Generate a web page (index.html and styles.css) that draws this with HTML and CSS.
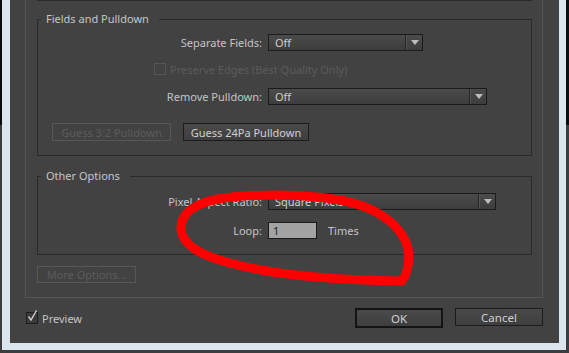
FILE: index.html
```html
<!DOCTYPE html>
<html lang="en">

<head>
    <meta charset="UTF-8">
    <meta name="viewport" content="width=device-width, initial-scale=1.0">
    <title>Interpret Footage</title>
    <link rel="stylesheet" href="styles.css">
</head>

<body>
    <div class="screen">
        <div class="frame">
            <div class="dialog">
                <div class="panel">
                    <div class="prev-group"></div>

                    <fieldset class="group group-fields">
                        <legend>Fields and Pulldown</legend>
                        <div class="row row-first">
                            <label class="row-label">Separate Fields:</label>
                            <div class="select select-short"><span class="select-value">Off</span><span class="select-arrow"></span></div>
                        </div>
                        <div class="check-row is-disabled">
                            <span class="box"></span>
                            <span>Preserve Edges (Best Quality Only)</span>
                        </div>
                        <div class="row">
                            <label class="row-label">Remove Pulldown:</label>
                            <div class="select select-mid"><span class="select-value">Off</span><span class="select-arrow"></span></div>
                        </div>
                        <div class="btn-row">
                            <button class="btn btn-disabled btn-guess32">Guess 3:2 Pulldown</button>
                            <button class="btn btn-guess24">Guess 24Pa Pulldown</button>
                        </div>
                    </fieldset>

                    <fieldset class="group group-other">
                        <legend>Other Options</legend>
                        <div class="row row-first">
                            <label class="row-label">Pixel Aspect Ratio:</label>
                            <div class="select select-long"><span class="select-value">Square Pixels</span><span class="select-arrow"></span></div>
                        </div>
                        <div class="row row-loop">
                            <label class="row-label">Loop:</label>
                            <div class="loop-field">
                                <input class="loop-input" type="text" value="1">
                                <span class="times">Times</span>
                            </div>
                        </div>
                    </fieldset>

                    <button class="btn btn-disabled btn-more">More Options...</button>
                </div>

                <div class="footer">
                    <label class="check-row preview">
                        <span class="box">
                            <svg width="12" height="14" viewBox="0 0 12 14"><path d="M2.5 7.5 L5 11 L10.5 1.5" fill="none" stroke="#d2d2d2" stroke-width="1.4"/></svg>
                        </span>
                        <span>Preview</span>
                    </label>
                    <div class="footer-btns">
                        <button class="btn btn-ok">OK</button>
                        <button class="btn btn-cancel">Cancel</button>
                    </div>
                </div>
            </div>
        </div>

        <!-- red marker scribble drawn over the dialog -->
        <svg class="scribble" width="569" height="353" viewBox="0 0 569 353">
            <path d="M402 281 C411 268 410 250 405 240 C395 220 372 206 340 200 C305 194 255 193 218 199 C192 204 180 215 181 230 C183 245 200 255 230 263 C270 274 330 280 402 281" fill="none" stroke="#ff0000" stroke-width="9" stroke-linecap="round" stroke-linejoin="round"/>
        </svg>
    </div>
</body>
</html>
```

FILE: styles.css
```css
body {
    margin: 0;
    padding: 0;
    background: #2f2f2f;
    font-family: 'Noto Sans', 'Liberation Sans', sans-serif;
    font-size: 11px;
    color: #c4c4c4;
}

.screen {
    position: relative;
    width: 569px;
    height: 353px;
    overflow: hidden;
    background: linear-gradient(to bottom, #0c0c0c 0, #0c0c0c 125px, #3d3d3d 125px);
}

.frame {
    box-sizing: border-box;
    width: 564px;
    height: 350px;
    margin-left: 2px;
    padding: 0 7px 7px 8px;
    background: #dbe5ee;
}

.dialog {
    height: 343px;
    background: #424242;
}

.panel {
    box-sizing: border-box;
    width: 518px;
    height: 298px;
    margin-left: 15px;
    border: 1px solid #555;
    border-top: none;
}

.prev-group {
    margin: 0 10px 0 11px;
    border-bottom: 1px solid #2a2a2a;
}

.group {
    margin: 11px 10px 0 11px;
    padding: 0;
    border: 1px solid #2a2a2a;
    min-width: 0;
}

.group legend {
    margin-left: 3px;
    padding: 0 10px 0 5px;
    line-height: 14px;
    color: #c6c6c6;
}

.row {
    display: grid;
    grid-template-columns: 224px auto;
    column-gap: 6px;
    align-items: center;
    height: 17px;
}

.row-label {
    text-align: right;
}

.group-fields .row-first {
    margin-top: 8px;
}

.select {
    box-sizing: border-box;
    display: flex;
    height: 17px;
    border: 1px solid #1b1b1b;
    background: linear-gradient(to bottom, #4b4b4b, #3d3d3d);
    color: #cfcfcf;
}

.select-short {
    width: 155px;
}

.select-mid {
    width: 219px;
}

.select-long {
    width: 228px;
}

.select-value {
    flex-grow: 1;
    padding-left: 6px;
    line-height: 15px;
}

.select-arrow {
    position: relative;
    width: 16px;
    border-left: 1px solid #262626;
    box-shadow: inset 1px 0 0 #555;
}

.select-arrow::after {
    content: "";
    position: absolute;
    left: 5px;
    top: 5px;
    border-left: 4px solid transparent;
    border-right: 4px solid transparent;
    border-top: 5px solid #bdbdbd;
}

.check-row {
    display: flex;
    align-items: center;
    gap: 4px;
    height: 14px;
}

.group-fields .check-row {
    margin: 11px 0 12px 116px;
}

.box {
    box-sizing: border-box;
    display: inline-block;
    position: relative;
    width: 12px;
    height: 12px;
    border: 1px solid #1f1f1f;
    background: #3a3a3a;
}

.is-disabled {
    color: #5b5b5b;
}

.is-disabled .box {
    border-color: #555;
    background: transparent;
}

.btn {
    box-sizing: border-box;
    height: 18px;
    padding: 0;
    border: 1px solid #1c1c1c;
    background: linear-gradient(to bottom, #4a4a4a, #3e3e3e);
    color: #d0d0d0;
    font-family: inherit;
    font-size: 11px;
}

.btn-disabled {
    border-color: #575757;
    background: #424242;
    color: #5c5c5c;
}

.btn-row {
    display: flex;
    gap: 12px;
    margin: 18px 0 14px 14px;
}

.btn-guess32 {
    width: 119px;
}

.btn-guess24 {
    width: 126px;
}

.group-other {
    margin-top: 13px;
}

.group-other .row-first {
    margin-top: 10px;
}

.row-loop {
    margin: 12px 0 15px;
}

.loop-field {
    display: flex;
    align-items: center;
    gap: 11px;
}

.loop-input {
    box-sizing: border-box;
    width: 49px;
    height: 17px;
    margin: 0;
    padding: 0 4px;
    border: 1px solid #1a1a1a;
    background: #a3a3a3;
    color: #1e1e1e;
    font-family: inherit;
    font-size: 11px;
}

.times {
    color: #c4c4c4;
}

.btn-more {
    display: block;
    width: 99px;
    height: 17px;
    margin: 11px 0 0 11px;
}

.footer {
    display: flex;
    justify-content: space-between;
    align-items: center;
    height: 20px;
    margin-top: 10px;
    padding: 0 16px;
}

.preview {
    gap: 4px;
}

.preview .box svg {
    position: absolute;
    left: -1px;
    top: -4px;
}

.footer-btns {
    display: flex;
    gap: 12px;
}

.btn-ok,
.btn-cancel {
    width: 88px;
    font-size: 11.5px;
}

.btn-ok {
    height: 20px;
    border: 2px solid #141414;
}

.scribble {
    position: absolute;
    left: 0;
    top: 0;
}
```
